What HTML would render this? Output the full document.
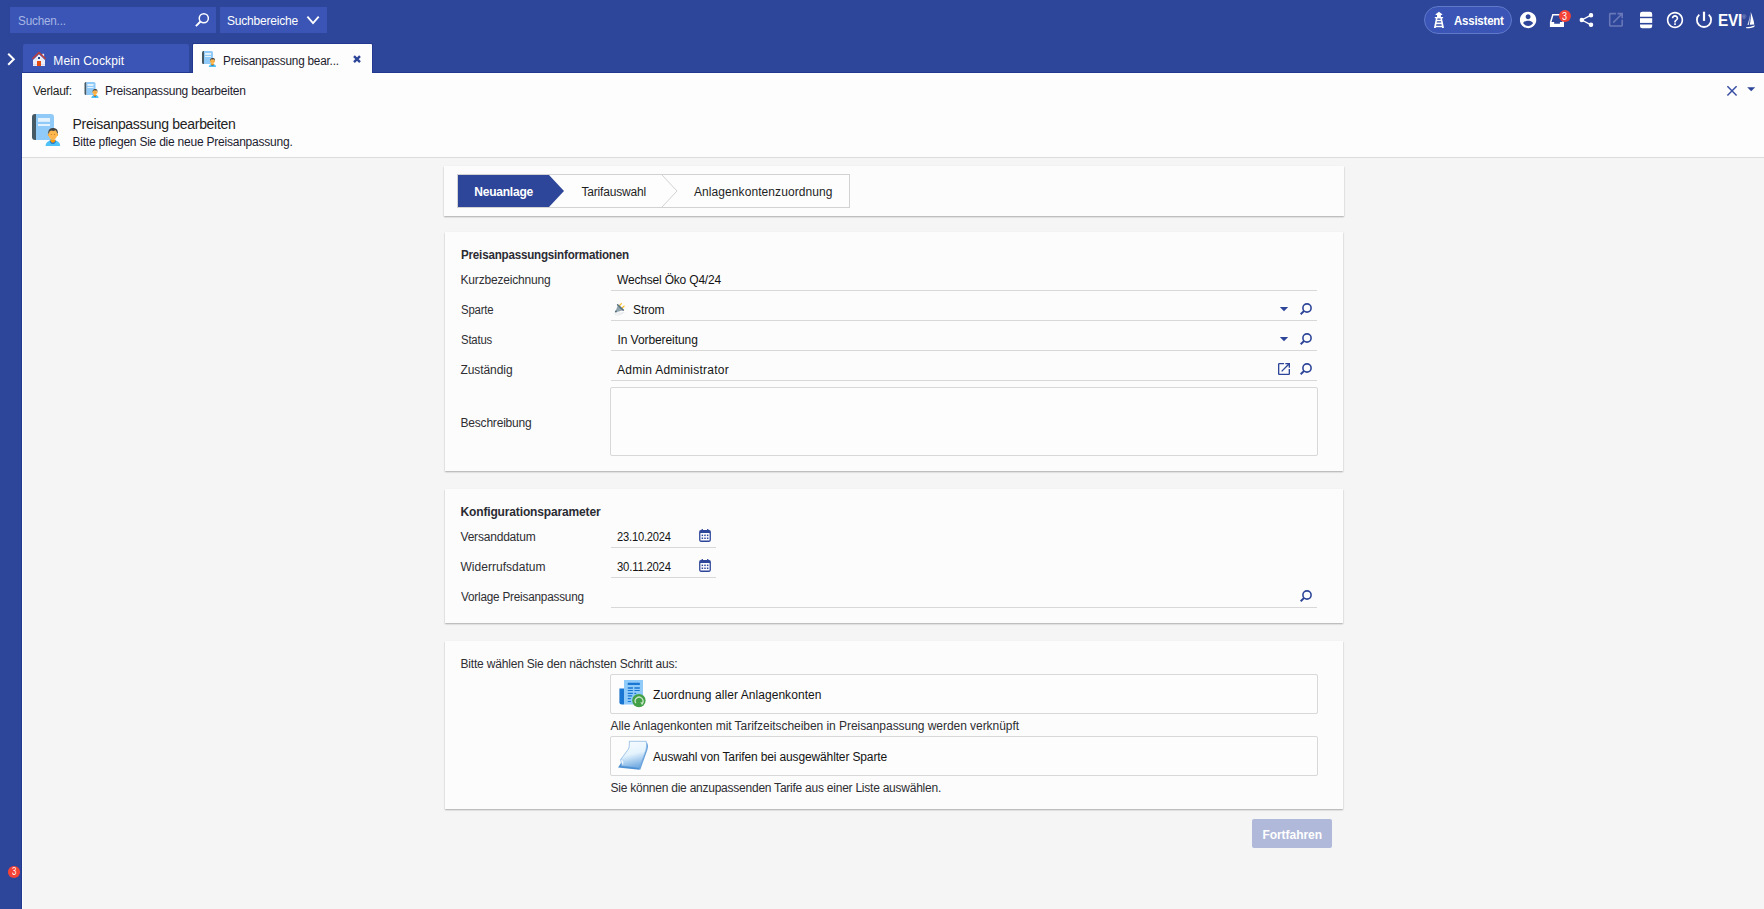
<!DOCTYPE html>
<html lang="de">
<head>
<meta charset="utf-8">
<title>Preisanpassung bearbeiten</title>
<style>
*{box-sizing:border-box;margin:0;padding:0}
html,body{width:1764px;height:909px;overflow:hidden}
body{font-family:"Liberation Sans",sans-serif;font-size:12px;color:#1f1f1f;background:#f5f5f5;position:relative}
.abs{position:absolute}
svg{position:absolute;overflow:visible}
.t{position:absolute;white-space:nowrap;line-height:16px}
#top{left:0;top:0;width:1764px;height:73px;background:#2e4699}
#side{left:0;top:0;width:22px;height:909px;background:#2e4699}
#search{left:10px;top:7px;width:206px;height:26px;background:#3a55b5}
#sb{left:220px;top:7px;width:107px;height:26px;background:#3a55b5}
#tab1{left:23px;top:44px;width:166px;height:28px;background:#3a55b5;border-radius:2px 2px 0 0}
#tab2{left:193px;top:44px;width:179px;height:29px;background:#fdfdfd;border-radius:1px 1px 0 0}
#head{left:22px;top:73px;width:1742px;height:85px;background:#fdfdfd;border-bottom:1px solid #dcdcdc}
#pill{left:1424px;top:6px;width:88px;height:28px;border-radius:14px;background:#3a55b5;border:1px solid #6179c9}
.panel{position:absolute;left:445px;width:898px;background:#fcfcfc;box-shadow:0 1px 1.5px rgba(0,0,0,.30)}
.line{position:absolute;height:1px;background:#d8d8d8;left:611px;width:706px}
.box{position:absolute;left:610px;width:708px;border:1px solid #d8d8d8;background:#fdfdfd;border-radius:2px}
</style>
</head>
<body>
<div id="top" class="abs"></div>
<div id="side" class="abs"></div>
<div class="abs" style="left:21px;top:73px;width:1px;height:836px;background:#20388f"></div>
<div id="search" class="abs"></div>
<div id="sb" class="abs"></div>
<div class="abs" style="left:22px;top:72px;width:1742px;height:1px;background:#20388f"></div>
<div id="tab1" class="abs"></div>
<div class="abs" style="left:192px;top:43px;width:181px;height:30px;background:#20388f;border-radius:2px 2px 0 0"></div>
<div id="tab2" class="abs"></div>
<div id="head" class="abs"></div>
<div id="pill" class="abs"></div>

<div class="abs" style="left:22px;top:158px;width:1px;height:751px;background:#fdfdfd"></div>
<!-- panels -->
<div class="panel" style="left:444px;width:900px;top:166px;height:50px"></div>
<div class="panel" style="top:232px;height:239px"></div>
<div class="panel" style="top:489px;height:134px"></div>
<div class="panel" style="top:641px;height:168px"></div>

<!-- wizard -->
<div class="abs" style="left:457px;top:174px;width:393px;height:34px;border:1px solid #d2d2d2;background:#fdfdfd"></div>

<!-- field underlines -->
<div class="line" style="top:290px"></div>
<div class="line" style="top:320px"></div>
<div class="line" style="top:350px"></div>
<div class="line" style="top:380px"></div>
<div class="box" style="top:387px;height:69px"></div>
<div class="line" style="top:547px;width:105px"></div>
<div class="line" style="top:577px;width:105px"></div>
<div class="line" style="top:607px"></div>
<div class="box" style="top:674px;height:40px"></div>
<div class="box" style="top:736px;height:40px"></div>

<div class="abs" id="btn" style="left:1252px;top:819px;width:80px;height:29px;background:#b0b9d9;border-radius:2px"></div>

<svg width="1764" height="909" viewBox="0 0 1764 909" style="left:0;top:0">
<defs>
  <!-- material-like icons in 24 box -->
  <symbol id="i-open" viewBox="0 0 24 24"><path d="M19 19H5V5h7V3H5c-1.11 0-2 .9-2 2v14c0 1.1.89 2 2 2h14c1.1 0 2-.9 2-2v-7h-2v7zM14 3v2h3.590l-9.830 9.830 1.410 1.410L19 6.410V10h2V3h-7z"/></symbol>
  <symbol id="i-user" viewBox="0 0 24 24"><path d="M12 2C6.480 2 2 6.480 2 12s4.480 10 10 10 10-4.480 10-10S17.520 2 12 2zm0 3c1.660 0 3 1.340 3 3s-1.340 3-3 3-3-1.340-3-3 1.340-3 3-3zm0 14.200c-2.500 0-4.710-1.280-6-3.220.030-1.990 4-3.080 6-3.080 1.990 0 5.970 1.090 6 3.080-1.290 1.940-3.500 3.220-6 3.220z"/></symbol>
  <symbol id="i-share" viewBox="0 0 24 24"><path d="M18 16.080c-.760 0-1.440.300-1.960.770L8.910 12.700c.050-.230.090-.460.090-.700s-.040-.470-.090-.700l7.050-4.110c.540.500 1.250.810 2.040.810 1.660 0 3-1.340 3-3s-1.340-3-3-3-3 1.340-3 3c0 .240.040.470.090.700L8.040 9.810C7.500 9.310 6.790 9 6 9c-1.660 0-3 1.340-3 3s1.340 3 3 3c.790 0 1.500-.310 2.040-.810l7.120 4.160c-.050.210-.080.430-.080.650 0 1.610 1.310 2.920 2.920 2.920 1.610 0 2.920-1.310 2.920-2.920s-1.310-2.920-2.920-2.920z"/></symbol>
  <symbol id="i-help" viewBox="0 0 24 24"><path d="M11 18h2v-2h-2v2zm1-16C6.480 2 2 6.480 2 12s4.480 10 10 10 10-4.480 10-10S17.520 2 12 2zm0 18c-4.410 0-8-3.590-8-8s3.590-8 8-8 8 3.590 8 8-3.590 8-8 8zm0-14c-2.210 0-4 1.790-4 4h2c0-1.100.900-2 2-2s2 .900 2 2c0 2-3 1.750-3 5h2c0-2.250 3-2.500 3-5 0-2.210-1.790-4-4-4z"/></symbol>
  <symbol id="i-power" viewBox="0 0 24 24"><path d="M13 3h-2v10h2V3zm4.830 2.170l-1.420 1.420C17.990 7.860 19 9.810 19 12c0 3.870-3.130 7-7 7s-7-3.130-7-7c0-2.190 1.010-4.140 2.580-5.420L6.170 5.170C4.230 6.820 3 9.260 3 12c0 4.970 4.030 9 9 9s9-4.030 9-9c0-2.740-1.230-5.180-3.170-6.830z"/></symbol>
  <!-- magnifier 12x12 box, handle to lower-left -->
  <symbol id="i-mag" viewBox="0 0 12 12"><circle cx="7" cy="5" r="4.100" fill="none" stroke="currentColor" stroke-width="1.600"/><path d="M4.100 7.900L0.700 11.300" stroke="currentColor" stroke-width="2" stroke-linecap="butt" fill="none"/></symbol>
  <!-- calendar 12 x 13 -->
  <symbol id="i-cal" viewBox="0 0 12 13">
    <rect x="0.100" y="1.100" width="11.800" height="11.800" rx="1.800" fill="#2e4699"/>
    <rect x="1.400" y="3.900" width="9.200" height="7.600" rx="0.400" fill="#fdfdfd"/>
    <rect x="2.600" y="0" width="1.300" height="2" fill="#2e4699"/><rect x="8.100" y="0" width="1.300" height="2" fill="#2e4699"/>
    <g fill="#2e4699"><rect x="2.600" y="5.600" width="1.500" height="1.500"/><rect x="5.250" y="5.600" width="1.500" height="1.500"/><rect x="7.900" y="5.600" width="1.500" height="1.500"/>
    <rect x="2.600" y="8.500" width="1.500" height="1.500"/><rect x="5.250" y="8.500" width="1.500" height="1.500"/><rect x="7.900" y="8.500" width="1.500" height="1.500"/></g>
  </symbol>
  <!-- book + person 32x32 (origin at book top-left = 2,2) -->
  <symbol id="i-doc" viewBox="0 0 32 34">
    <path d="M5 2h1v26H5a3 3 0 0 1-3-3V5a3 3 0 0 1 3-3z" fill="#455a64"/>
    <path d="M6 2h15a3 3 0 0 1 3 3v23H6z" fill="#90caf9"/>
    <rect x="8" y="6" width="12" height="3.800" fill="#e3f2fd"/>
    <rect x="8" y="12" width="12" height="2" fill="#e3f2fd"/>
    <path d="M15.600 34c0-3.600 3.200-6 7.300-6s7.300 2.400 7.300 6z" fill="#4fc3f7"/>
    <path d="M20.300 27.600v1.200c0 1.400 1.100 2.600 2.600 2.600s2.600-1.200 2.600-2.600v-1.200z" fill="#ff9800"/>
    <path d="M20.100 28.300c.500 1.400 1.500 2.400 2.800 2.400s2.300-1 2.800-2.400l.500.600c-.600 1.800-1.700 3-3.300 3s-2.700-1.200-3.300-3z" fill="#1976d2"/>
    <ellipse cx="18.600" cy="22.700" rx="0.900" ry="1.200" fill="#ffa726"/><ellipse cx="27.200" cy="22.700" rx="0.900" ry="1.200" fill="#ffa726"/>
    <path d="M18.700 20.500c0-2.600 1.900-4 4.200-4s4.200 1.400 4.200 4v2.600c0 2.400-1.900 4.700-4.200 4.700s-4.200-2.300-4.200-4.700z" fill="#ffb74d"/>
    <path d="M22.900 15.900c-2.700 0-4.700 1.800-4.700 4.800l.700 1.300.400-2.200 1.700-1.300 2.400.5 2.300-.7 1.100 1.600.400 2.100.700-1.300c0-2.400-.900-3.700-1.900-4-.500-.600-1.700-.8-3.100-.8z" fill="#424242"/>
    <circle cx="21.200" cy="22.500" r="0.450" fill="#784719"/><circle cx="24.600" cy="22.500" r="0.450" fill="#784719"/>
  </symbol>
  <linearGradient id="gPaper" x1="0" y1="0" x2="0.250" y2="1"><stop offset="0" stop-color="#fafdff"/><stop offset="0.550" stop-color="#e4f3fd"/><stop offset="1" stop-color="#7db1e4"/></linearGradient>
</defs>

<!-- search magnifier (white) -->
<circle cx="203.800" cy="18.200" r="4.550" fill="none" stroke="#fff" stroke-width="1.500"/><path d="M200.500 21.500L195.900 26.100" stroke="#fff" stroke-width="1.900" fill="none"/>
<!-- chevron down -->
<path d="M307.400 16.600l5.650 6.500 5.650-6.500" fill="none" stroke="#fff" stroke-width="1.800"/>
<!-- sidebar toggle -->
<path d="M8.200 53.800l5.600 5.500-5.600 5.500" fill="none" stroke="#fff" stroke-width="2"/>
<!-- home icon -->
<g>
  <rect x="42.300" y="53.800" width="1.800" height="3.200" fill="#eef0fb"/>
  <path d="M39 54.200L45 60v6H33v-6z" fill="#ececf8"/>
  <rect x="33" y="64" width="12" height="1" fill="#d6d9f2"/>
  <path d="M32.400 58.900L39 52.600l6.600 6.300" fill="none" stroke="#b9413f" stroke-width="1.500"/>
  <rect x="38" y="57" width="2" height="2" fill="#1f4b8e"/>
  <rect x="37" y="61" width="4" height="5" fill="#e24a12"/>
</g>
<!-- doc icons -->
<use href="#i-doc" x="201" y="50" width="16" height="17"/>
<use href="#i-doc" x="83.500" y="81" width="16" height="17"/>
<use href="#i-doc" x="30" y="112" width="32" height="34"/>
<!-- tab close -->
<path d="M354 56.200l6 6M360 56.200l-6 6" stroke="#2e4699" stroke-width="2.400" fill="none"/>
<!-- lighthouse -->
<g stroke="none">
  <path d="M1438.950 11.700l3.300 2.500v.700h-1.350v2h2.200v1.300h-1.100l2 9.800h-10.100l2-9.800h-1.100v-1.300h2.200v-2h-1.350v-.700z" fill="#fff"/>
  <g fill="#2f47a6">
    <path d="M1437.400 18.500h3.100l.200 1.200h-3.500z"/>
    <path d="M1436.950 21.200h4l.250 1.400h-4.500z"/>
    <path d="M1436.400 24.300h5.100l.300 1.400h-5.700z"/>
    <path d="M1435.950 27.200h6l.200.900h-6.400z"/>
  </g>
</g>
<!-- user -->
<use href="#i-user" x="1518.300" y="10.200" width="19.600" height="19.600" fill="#fff"/>
<!-- inbox -->
<path d="M1552.300 14h9.400l2.300 8v5h-14.100v-5zM1553.400 15.500l-1.900 6.400h2.700v1.900h5.700v-1.900h2.700l-1.900-6.400z" fill="#fff" fill-rule="evenodd"/>
<circle cx="1564.950" cy="16" r="6" fill="#f44336"/>
<!-- share -->
<g fill="#fff" stroke="#fff" stroke-width="1.300"><path d="M1591 15.200l-9.200 4.800 9.200 4.800" fill="none"/><circle cx="1581.800" cy="20" r="1.600"/><circle cx="1591" cy="15.200" r="1.600"/><circle cx="1591" cy="24.800" r="1.600"/></g>
<!-- open in new (dim) -->
<use href="#i-open" x="1606.600" y="10.500" width="18.700" height="18.700" fill="#6878b9"/>
<!-- db -->
<path d="M1640 14a2.200 2.200 0 0 1 2.200-2.200h7.800a2.200 2.200 0 0 1 2.200 2.200v2.800H1640z" fill="#fff"/>
<rect x="1640" y="18.200" width="12.200" height="4.700" fill="#fff"/>
<path d="M1640 24.400h12.200v1.600a2.200 2.200 0 0 1-2.200 2.200h-7.800a2.200 2.200 0 0 1-2.200-2.200z" fill="#fff"/>
<!-- help -->
<use href="#i-help" x="1665.200" y="10.200" width="19.600" height="19.600" fill="#fff"/>
<!-- power -->
<path d="M1699.300 14.600a7.100 7.100 0 1 0 9.400 0" fill="none" stroke="#fff" stroke-width="1.800"/><rect x="1702.900" y="11.700" width="2.200" height="9.200" fill="#fff"/>
<!-- EVI sailboat -->
<g fill="#fff">
  <path d="M1750.700 12.100c1.600 3.600 3 8 3.600 12.300l-4.500.4c.9-4 1.200-8.400.9-12.700z"/>
  <path d="M1750 14.800c-.1 3.600-.5 6.900-1.100 10l-1.500.2c1.200-3.200 2.100-6.700 2.600-10.200z" opacity=".85"/>
  <path d="M1745.900 27.200c3-.1 6-.8 8.900-2l-.6 1.700c-2.300 1-5 1.400-7.900 1.300z"/>
</g>
<!-- header close + triangle -->
<path d="M1727.400 86.300l9.200 9.200M1736.600 86.300l-9.200 9.200" stroke="#3a4fa6" stroke-width="1.500" fill="none"/>
<path d="M1747.200 87.200h8l-4 4z" fill="#2e4699"/>

<!-- wizard -->
<path d="M458 175h91l15 16-15 16h-91z" fill="#2e4699"/>
<path d="M662 175l15 16-15 16" fill="none" stroke="#d2d2d2" stroke-width="1"/>

<!-- strom plug -->
<g transform="translate(0.200 0.500)">
  <path d="M614.800 312.300c1.500.6 5.500.4 9.300-.2M614.700 312.400c-.9 1.400.6 2.500 3.500 2.100 2-.3 3.600-1.300 4.800-2.200" fill="none" stroke="#e3e7ea" stroke-width="0.900"/>
  <path d="M619.600 304.700l1.600-1.600M622.100 307.300l1.700-1.600" stroke="#fbc02d" stroke-width="1.300" stroke-linecap="round"/>
  <path d="M617.700 304.700l5 5-6 1.700-1.200-1.100z" fill="#90a4ae"/>
  <path d="M617.400 304.200l5.700 5.400" stroke="#546e7a" stroke-width="1.500" stroke-linecap="round"/>
  <circle cx="615.700" cy="310.900" r="1" fill="#546e7a"/>
</g>

<!-- dropdown triangles -->
<path d="M1279.800 307h8.400l-4.200 4.200z" fill="#2e4699"/>
<path d="M1279.800 337h8.400l-4.200 4.200z" fill="#2e4699"/>
<!-- magnifiers -->
<use href="#i-mag" x="1300" y="303" width="12" height="12" color="#2e4699"/>
<use href="#i-mag" x="1300" y="333" width="12" height="12" color="#2e4699"/>
<use href="#i-mag" x="1300" y="363" width="12" height="12" color="#2e4699"/>
<use href="#i-mag" x="1300" y="590" width="12" height="12" color="#2e4699"/>
<!-- open in new blue -->
<use href="#i-open" x="1276" y="361" width="16" height="16" fill="#2e4699"/>
<!-- calendars -->
<use href="#i-cal" x="699" y="529" width="12" height="13"/>
<use href="#i-cal" x="699" y="559" width="12" height="13"/>

<!-- Zuordnung icon -->
<g>
  <path d="M619.400 688.600h4.800v16h-2.400a2.400 2.400 0 0 1-2.400-2.400z" fill="#1976d2"/>
  <rect x="624" y="680" width="19" height="24.500" fill="#90caf9"/>
  <rect x="627.700" y="682.800" width="12.200" height="2.300" rx="0.600" fill="#1976d2"/>
  <g fill="#1976d2">
    <rect x="627.700" y="687.200" width="5.300" height="1.500" rx="0.400"/><rect x="634.300" y="687.200" width="5.600" height="1.500" rx="0.400"/>
    <rect x="627.700" y="690" width="5.300" height="1.100" rx="0.400"/><rect x="634.300" y="690" width="5.600" height="1.100" rx="0.400"/>
    <rect x="627.700" y="692.800" width="5.300" height="1.100" rx="0.400"/><rect x="634.300" y="692.800" width="2" height="1.100" rx="0.400"/>
    <rect x="627.700" y="695.300" width="4.600" height="1.200" rx="0.400"/>
    <rect x="627.700" y="698.100" width="3.300" height="1.100" rx="0.400"/>
    <rect x="627.700" y="701" width="3.300" height="1.100" rx="0.400"/>
  </g>
  <circle cx="638.900" cy="700.600" r="6.700" fill="#43a047"/>
  <path d="M635.800 703.200a3.900 3.900 0 1 1 6.300.4" fill="none" stroke="#c8e6c9" stroke-width="1.300"/>
  <path d="M640.300 702.200l3.300.3-1.500 2.700z" fill="#c8e6c9"/>
</g>

<!-- paper icon -->
<g>
  <path d="M618 767.500l3.800-5.500 18.400 2.800-.7 5z" fill="#4c8fd2"/>
  <path d="M646.400 742.200c1.900 1.700 1.900 4.600 1.100 7.300l-7.200 20.200-1.300-.5 7.200-20z" fill="#6aa3dc"/>
  <path d="M629.300 741.300h16.900c.9 4 .2 7.400-1 10.800l-5.800 16-18.300-2.200c.5-2.500 0-4.600-.5-6.300l7.600-10.200c1.100-1.700 1.300-5 1.100-8.100z" fill="url(#gPaper)" stroke="#5b9bd8" stroke-width="0.550"/>
  <path d="M620.400 759.500c1.400.1 2.500.6 3 1.700.5 1.200.2 2.800-.5 4.600z" fill="#f8fcff" stroke="#8bbce9" stroke-width="0.400"/>
</g>

<!-- sidebar badge -->
<circle cx="14" cy="872" r="6.100" fill="#f44336"/>
</svg>

<div class="t" style="left:18px;top:12.84px;font-size:12px;color:#a8b6e6;letter-spacing:-0.200px;transform:scaleX(0.9775);transform-origin:0 0">Suchen...</div>
<div class="t" style="left:227px;top:12.84px;font-size:12px;color:#ffffff;letter-spacing:-0.199px">Suchbereiche</div>
<div class="t" style="left:53.25px;top:52.84px;font-size:12px;color:#ffffff;letter-spacing:0.137px">Mein Cockpit</div>
<div class="t" style="left:223.25px;top:52.84px;font-size:12px;color:#1c1c2e;letter-spacing:-0.200px;transform:scaleX(0.9785);transform-origin:0 0">Preisanpassung bear...</div>
<div class="t" style="left:33px;top:82.84px;font-size:12px;color:#222222;letter-spacing:-0.244px">Verlauf:</div>
<div class="t" style="left:105px;top:82.84px;font-size:12px;color:#1c1c2e;letter-spacing:-0.214px">Preisanpassung bearbeiten</div>
<div class="t" style="left:72.5px;top:116.15px;font-size:14px;color:#222222;letter-spacing:-0.299px">Preisanpassung bearbeiten</div>
<div class="t" style="left:72.5px;top:133.84px;font-size:12px;color:#1c1c2e;letter-spacing:-0.226px">Bitte pflegen Sie die neue Preisanpassung.</div>
<div class="t" style="left:1453.6px;top:12.84px;font-size:12px;color:#ffffff;letter-spacing:-0.200px;transform:scaleX(0.9517);transform-origin:0 0;font-weight:700">Assistent</div>
<div class="t" style="left:474.25px;top:183.84px;font-size:12px;color:#ffffff;letter-spacing:-0.215px;font-weight:700">Neuanlage</div>
<div class="t" style="left:581.5px;top:183.84px;font-size:12px;color:#1f1f1f;letter-spacing:-0.184px">Tarifauswahl</div>
<div class="t" style="left:694px;top:183.84px;font-size:12px;color:#1f1f1f;letter-spacing:0.078px">Anlagenkontenzuordnung</div>
<div class="t" style="left:460.5px;top:246.84px;font-size:12px;color:#2b2b33;letter-spacing:-0.200px;transform:scaleX(0.9657);transform-origin:0 0;font-weight:700">Preisanpassungsinformationen</div>
<div class="t" style="left:460.5px;top:271.84px;font-size:12px;color:#2e2e33;letter-spacing:-0.182px">Kurzbezeichnung</div>
<div class="t" style="left:617px;top:271.84px;font-size:12px;color:#141414;letter-spacing:-0.187px">Wechsel Öko Q4/24</div>
<div class="t" style="left:460.5px;top:301.84px;font-size:12px;color:#2e2e33;letter-spacing:-0.200px;transform:scaleX(0.9459);transform-origin:0 0">Sparte</div>
<div class="t" style="left:633px;top:301.84px;font-size:12px;color:#141414;letter-spacing:-0.103px">Strom</div>
<div class="t" style="left:460.5px;top:331.84px;font-size:12px;color:#2e2e33;letter-spacing:-0.200px;transform:scaleX(0.9461);transform-origin:0 0">Status</div>
<div class="t" style="left:617.5px;top:331.84px;font-size:12px;color:#141414;letter-spacing:-0.077px">In Vorbereitung</div>
<div class="t" style="left:460.5px;top:361.84px;font-size:12px;color:#2e2e33;letter-spacing:-0.078px">Zuständig</div>
<div class="t" style="left:617px;top:361.84px;font-size:12px;color:#141414;letter-spacing:0.243px">Admin Administrator</div>
<div class="t" style="left:460.5px;top:414.84px;font-size:12px;color:#2e2e33;letter-spacing:-0.199px">Beschreibung</div>
<div class="t" style="left:460.5px;top:503.84px;font-size:12px;color:#2b2b33;letter-spacing:-0.146px;font-weight:700">Konfigurationsparameter</div>
<div class="t" style="left:460.5px;top:528.84px;font-size:12px;color:#2e2e33;letter-spacing:-0.199px">Versanddatum</div>
<div class="t" style="left:617px;top:528.84px;font-size:12px;color:#141414;letter-spacing:-0.200px;transform:scaleX(0.9268);transform-origin:0 0">23.10.2024</div>
<div class="t" style="left:460.5px;top:558.84px;font-size:12px;color:#2e2e33;letter-spacing:0.021px">Widerrufsdatum</div>
<div class="t" style="left:617px;top:558.84px;font-size:12px;color:#141414;letter-spacing:-0.200px;transform:scaleX(0.9412);transform-origin:0 0">30.11.2024</div>
<div class="t" style="left:460.5px;top:588.84px;font-size:12px;color:#2e2e33;letter-spacing:-0.200px;transform:scaleX(0.9770);transform-origin:0 0">Vorlage Preisanpassung</div>
<div class="t" style="left:460.5px;top:655.84px;font-size:12px;color:#2e2e33;letter-spacing:-0.186px">Bitte wählen Sie den nächsten Schritt aus:</div>
<div class="t" style="left:653px;top:686.84px;font-size:12px;color:#141414;letter-spacing:0.059px">Zuordnung aller Anlagenkonten</div>
<div class="t" style="left:610.5px;top:717.84px;font-size:12px;color:#2e2e33;letter-spacing:-0.047px">Alle Anlagenkonten mit Tarifzeitscheiben in Preisanpassung werden verknüpft</div>
<div class="t" style="left:653px;top:748.84px;font-size:12px;color:#141414;letter-spacing:-0.138px">Auswahl von Tarifen bei ausgewählter Sparte</div>
<div class="t" style="left:610.5px;top:779.84px;font-size:12px;color:#2e2e33;letter-spacing:-0.240px">Sie können die anzupassenden Tarife aus einer Liste auswählen.</div>
<div class="t" style="left:12px;top:863.74px;font-size:10px;color:#ffffff;letter-spacing:-0.200px;transform:scaleX(0.7910);transform-origin:0 0">3</div>
<div class="t" style="left:1561.9px;top:8.54px;font-size:10px;color:#ffffff;letter-spacing:-0.200px;transform:scaleX(0.8989);transform-origin:0 0">3</div>
<div class="t" style="left:1717.7px;top:13.26px;font-size:16px;color:#ffffff;letter-spacing:-0.200px;transform:scaleX(0.9607);transform-origin:0 0;font-weight:700">EVI</div>
<div class="t" style="left:1741.8px;top:8.52px;font-size:6px;color:#aab4dc;letter-spacing:-0.022px">®</div>
<div class="t" style="left:1262.4px;top:826.84px;font-size:12px;color:#ffffff;letter-spacing:-0.040px;font-weight:700">Fortfahren</div>
</body>
</html>
